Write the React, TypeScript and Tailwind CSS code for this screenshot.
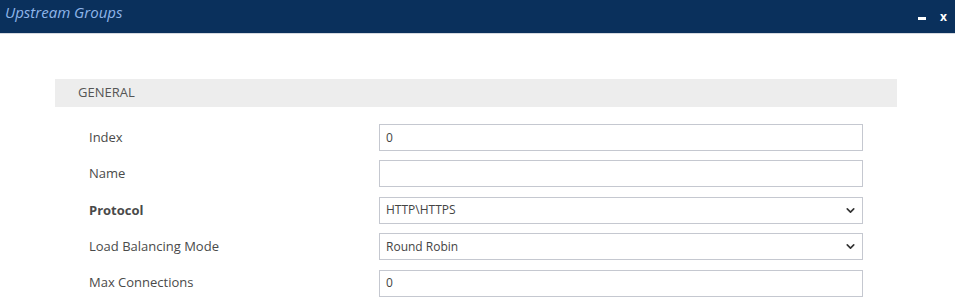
import { ChevronDown } from "lucide-react";

type Field = { label: string; value: string; kind: "input" | "select"; bold?: boolean };

const fields: Field[] = [
  { label: "Index", value: "0", kind: "input" },
  { label: "Name", value: "", kind: "input" },
  { label: "Protocol", value: "HTTP\\HTTPS", kind: "select", bold: true },
  { label: "Load Balancing Mode", value: "Round Robin", kind: "select" },
  { label: "Max Connections", value: "0", kind: "input" },
];

export default function App() {
  return (
    <div className="h-[306px] w-[955px] overflow-hidden bg-white font-['Open_Sans',sans-serif]">
      <div className="flex h-[34px] justify-between border-b border-[#d5d9e0] bg-[#0a305c] pl-[5px] pr-[8px]">
        <span className="pt-[1px] text-[15px] italic text-[#8fb6ea]">Upstream Groups</span>
        <div className="flex items-center gap-[14px] text-white">
          <span className="mt-[3px] h-[3px] w-[8px] bg-white" />
          <span className="text-[12px] font-bold">x</span>
        </div>
      </div>

      <div className="pl-[55px] pr-[58px] pt-[45px]">
        <div className="flex h-[28px] items-center bg-[#ededed] pl-[23px] text-[13px] text-[#555]">
          GENERAL
        </div>

        <div className="mt-[17px] flex flex-col gap-[9.4px]">
          {fields.map((f) => (
            <div key={f.label} className="flex items-center">
              <span
                className={`w-[324px] pl-[34px] text-[13px] text-[#4a4a4a] ${f.bold ? "font-bold" : ""}`}
              >
                {f.label}
              </span>
              <div className="flex h-[27px] w-[484px] items-center justify-between border border-[#c5c8d0] bg-white pl-[6px] pr-[5px] text-[12px] text-[#444]">
                <span>{f.value}</span>
                {f.kind === "select" && (
                  <ChevronDown size={13} strokeWidth={3} className="text-[#333]" />
                )}
              </div>
            </div>
          ))}
        </div>
      </div>
    </div>
  );
}
